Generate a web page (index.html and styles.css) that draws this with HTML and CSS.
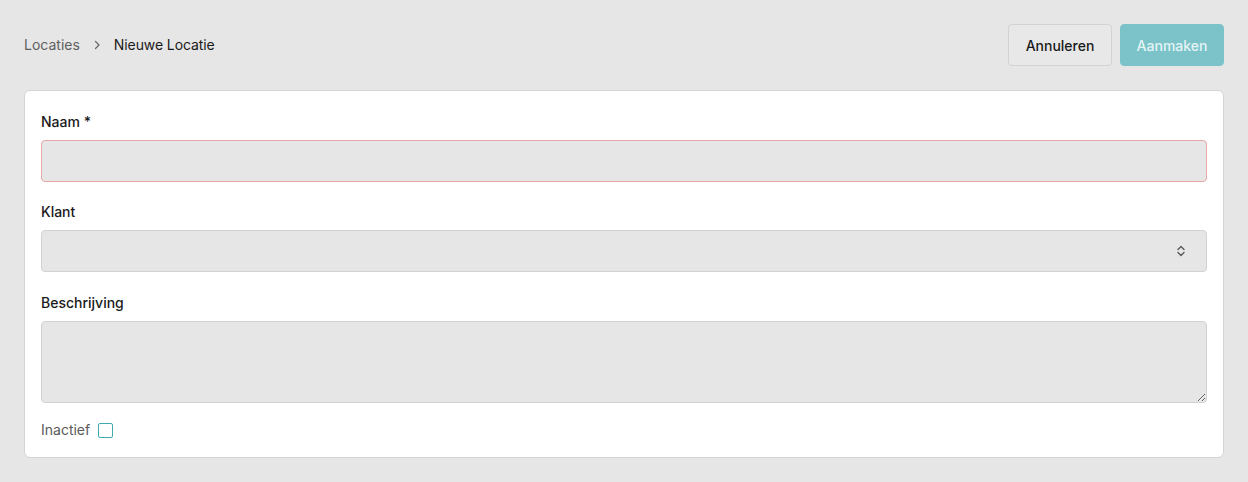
FILE: index.html
```html
<!DOCTYPE html>
<html lang="nl">
<head>
<meta charset="utf-8">
<title>Nieuwe Locatie</title>
<link rel="stylesheet" href="styles.css">
</head>
<body>
<div class="page">
  <header class="topbar">
    <nav class="crumbs">
      <a class="crumb-link">Locaties</a>
      <svg class="crumb-sep" width="8" height="10" viewBox="0 0 8 10"><path d="M2.5 1.5 L6 5 L2.5 8.5" fill="none" stroke="#666" stroke-width="1.2" stroke-linecap="round" stroke-linejoin="round"/></svg>
      <span class="crumb-current">Nieuwe Locatie</span>
    </nav>
    <div class="actions">
      <button class="btn btn-secondary">Annuleren</button>
      <button class="btn btn-primary">Aanmaken</button>
    </div>
  </header>
  <section class="card">
    <div class="field">
      <label class="label">Naam *</label>
      <input class="input input-error" type="text">
    </div>
    <div class="field">
      <label class="label">Klant</label>
      <div class="select">
        <svg class="select-icon" width="10" height="14" viewBox="0 0 10 14"><path d="M2 5.5 L5 2.5 L8 5.5 M2 8.5 L5 11.5 L8 8.5" fill="none" stroke="#555" stroke-width="1.3" stroke-linecap="round" stroke-linejoin="round"/></svg>
      </div>
    </div>
    <div class="field field-text">
      <label class="label">Beschrijving</label>
      <textarea class="textarea"></textarea>
    </div>
    <div class="check-row">
      <span class="check-label">Inactief</span>
      <span class="checkbox"></span>
    </div>
  </section>
</div>
</body>
</html>
```
FILE: styles.css
```css
* { box-sizing: border-box; }
html, body { margin: 0; padding: 0; }
body {
  background: #e6e6e6;
  font-family: Inter, "Noto Sans", "Liberation Sans", sans-serif;
  font-size: 14px;
  color: #1a1a1a;
}
.page {
  padding: 24px;
  display: flex;
  flex-direction: column;
  gap: 24px;
}
.topbar {
  display: flex;
  align-items: center;
  justify-content: space-between;
  height: 42px;
}
.crumbs {
  display: flex;
  align-items: center;
  line-height: 20px;
}
.crumb-link { color: #5f5f5f; }
.crumb-sep { margin: 0 13px 0 13px; }
.crumb-current { color: #1a1a1a; letter-spacing: -0.1px; }
.actions {
  display: flex;
  gap: 8px;
}
.btn {
  font-family: inherit;
  font-size: 14px;
  font-weight: 500;
  height: 42px;
  width: 104px;
  border-radius: 4px;
  padding: 0;
}
.btn-secondary {
  background: #e8e8e8;
  border: 1px solid #d2d2d2;
  color: #1a1a1a;
}
.btn-primary {
  background: #7bc3c9;
  border: 1px solid #7bc3c9;
  color: #e4f4f5;
}
.card {
  background: #fff;
  border: 1px solid #d4d4d4;
  border-radius: 6px;
  padding: 21px 16px 17px;
  display: flex;
  flex-direction: column;
  gap: 20px;
}
.field {
  display: flex;
  flex-direction: column;
  gap: 8px;
}
.field-text { margin-top: 1px; }
.label {
  font-weight: 500;
  line-height: 20px;
  color: #1a1a1a;
}
.input, .select, .textarea {
  display: block;
  width: 100%;
  background: #e6e6e6;
  border: 1px solid #d2d2d2;
  border-radius: 4px;
  font-family: inherit;
  font-size: 14px;
}
.input { height: 42px; }
.input-error { border-color: #e8a7a7; }
.select {
  height: 42px;
  display: flex;
  align-items: center;
  justify-content: flex-end;
  padding-right: 20px;
}
.textarea {
  height: 82px;
  resize: vertical;
}
.check-row {
  display: flex;
  align-items: center;
  gap: 8px;
  line-height: 20px;
  margin-top: -3px;
}
.check-label { color: #5a5a5a; }
.checkbox {
  width: 15px;
  height: 15px;
  border: 1.5px solid #3fa9b3;
  border-radius: 2px;
  background: #fff;
}
```
